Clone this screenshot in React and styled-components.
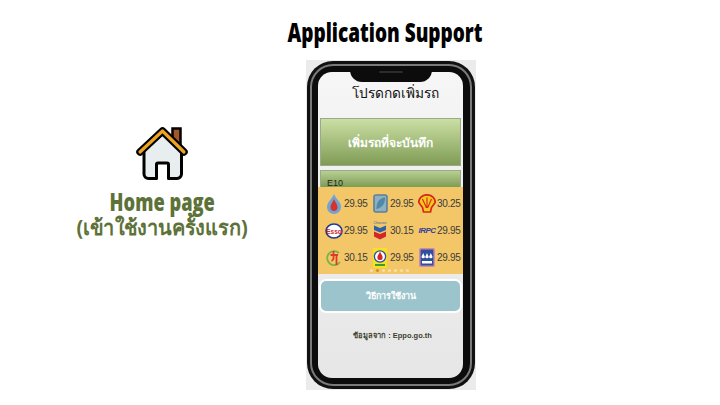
import React from 'react';
import styled, { createGlobalStyle } from 'styled-components';

const GlobalStyle = createGlobalStyle`
  html, body { margin: 0; padding: 0; background: #fff; }
  body { font-family: "Liberation Sans", "Noto Sans", sans-serif; }
`;

const HEADING_FONT = '"Open Sans", "Noto Sans", sans-serif';

const Page = styled.div`
  width: 720px;
  height: 405px;
  overflow: hidden;
  display: flex;
  background: #fff;
`;

const LeftColumn = styled.div`
  width: 324px;
  padding-top: 127px;
  display: flex;
  flex-direction: column;
  align-items: center;
`;

const HomeTitle = styled.div`
  margin-top: 9px;
  font: 800 24px/26px ${HEADING_FONT};
  color: #5d7239;
  transform: scaleX(0.76);
  white-space: nowrap;
`;

const HomeSubtitle = styled.div`
  font: 700 21px/25px ${HEADING_FONT};
  color: #5d7239;
  transform: scaleX(0.95);
  white-space: nowrap;
`;

const RightColumn = styled.div`
  width: 170px;
  margin-left: -18px;
  display: flex;
  flex-direction: column;
`;

const MainTitle = styled.h1`
  margin: 16px 12px 0 0;
  width: 158px;
  align-self: center;
  font: 800 26px/32px ${HEADING_FONT};
  color: #000;
  white-space: nowrap;
  display: flex;
  justify-content: center;
  transform: scaleX(0.73);
`;

const PhoneShot = styled.div`
  margin-top: 12px;
  width: 170px;
  height: 330px;
  background: #ebebeb;
  padding: 1px;
  box-sizing: border-box;
`;

const PhoneFrame = styled.div`
  position: relative;
  height: 100%;
  box-sizing: border-box;
  border-radius: 26px;
  background: #111;
  padding: 3px;
`;

const PhoneBezel = styled.div`
  height: 100%;
  box-sizing: border-box;
  border-radius: 23px;
  border: 2px solid #7a7a7a;
  background: #0c0c0c;
  padding: 6px 7px 6px 6px;
`;

const Screen = styled.div`
  height: 100%;
  box-sizing: border-box;
  border-radius: 14px;
  overflow: hidden;
  background: linear-gradient(#f6f6f6, #e6e6e6);
  display: flex;
  flex-direction: column;
  align-items: center;
`;

const Notch = styled.div`
  position: absolute;
  top: 5px;
  left: 43px;
  width: 82px;
  height: 16px;
  background: #0c0c0c;
  border-radius: 0 0 12px 12px;
  &::after {
    content: '';
    position: absolute;
    top: 5px;
    left: 29px;
    width: 24px;
    height: 2px;
    border-radius: 1px;
    background: #2c2c2c;
  }
`;

const ScreenTitle = styled.div`
  margin-top: 9px;
  padding-left: 9px;
  font: 400 13.7px/24px "Noto Sans", "DejaVu Sans", sans-serif;
  color: #111;
`;

const AddButton = styled.div`
  margin-top: 13px;
  width: 141px;
  height: 48px;
  display: flex;
  align-items: center;
  justify-content: center;
  background: linear-gradient(#cbdfa4, #7f9c55);
  border: 1px solid #9aa98a;
  box-sizing: border-box;
  color: #fff;
  font-size: 12px;
  font-weight: 700;
`;

const FuelBar = styled.div`
  margin-top: 4px;
  width: 141px;
  height: 17px;
  box-sizing: border-box;
  padding-left: 6px;
  display: flex;
  align-items: flex-end;
  background: linear-gradient(#b7d092, #7f9c55);
  border: 1px solid #9aa98a;
  border-bottom: 0;
`;

const FuelLabel = styled.span`
  font-size: 9px;
  line-height: 9px;
  margin-bottom: -1px;
  color: #222;
  position: relative;
`;

const PricePanel = styled.div`
  width: 100%;
  height: 87px;
  box-sizing: border-box;
  background: #f3c767;
  padding: 3px 1px 0 7px;
  position: relative;
`;

const PriceGrid = styled.div`
  display: grid;
  grid-template-columns: 46px 47px 46px;
  grid-auto-rows: 27px;
`;

const PriceCell = styled.div`
  display: flex;
  align-items: center;
`;

const LogoSlot = styled.div`
  width: 18px;
  height: 21px;
  display: flex;
  align-items: center;
  justify-content: center;
`;

const Price = styled.span`
  font-size: 10px;
  letter-spacing: -0.3px;
  color: #3c3c3c;
  margin-left: 1px;
`;

const IrpcText = styled.span`
  font-size: 8px;
  font-weight: 700;
  font-style: italic;
  color: #33409a;
  letter-spacing: -0.5px;
`;

const Dots = styled.div`
  position: absolute;
  bottom: 2px;
  left: 52px;
  display: flex;
  gap: 3px;
`;

const Dot = styled.span`
  width: 3px;
  height: 3px;
  border-radius: 50%;
  background: ${p => (p.$active ? '#d98c1e' : '#f7dfa8')};
`;

const HelpButton = styled.div`
  margin-top: 5px;
  width: 143px;
  height: 34px;
  box-sizing: border-box;
  border: 2px solid #fff;
  border-radius: 7px;
  background: #9cc4cc;
  color: #fff;
  font-size: 9px;
  font-weight: 700;
  display: flex;
  align-items: center;
  justify-content: center;
`;

const Source = styled.div`
  margin-top: 16px;
  padding-left: 4px;
  font-size: 7.5px;
  font-weight: 700;
  color: #3e3e2e;
`;

const HouseIcon = () => (
  <svg width="52" height="53" viewBox="0 0 52 53">
    <rect x="36.5" y="1.5" width="8" height="17" fill="#a5552a" stroke="#000" strokeWidth="2.5" />
    <path d="M8 22 V47 a4.500 4.500 0 0 0 4.500 4.500 H20.500 V37.500 a1.500 1.500 0 0 1 1.500 -1.500 H31 a1.500 1.500 0 0 1 1.500 1.500 V51.500 H41 a4.500 4.500 0 0 0 4.500 -4.500 V22 L26.500 7 Z" fill="#e8edf0" stroke="#000" strokeWidth="3" strokeLinejoin="round" />
    <path d="M4 25 L26.500 4 L48 25" fill="none" stroke="#000" strokeWidth="7.500" strokeLinecap="round" strokeLinejoin="round" />
    <path d="M4 25 L26.500 4 L48 25" fill="none" stroke="#eea321" strokeWidth="3.200" strokeLinecap="round" strokeLinejoin="round" />
  </svg>
);

const PttLogo = () => (
  <svg width="14" height="20" viewBox="0 0 14 20">
    <path d="M7 0 C9 5 14 8 14 13 a7 7 0 0 1 -14 0 C0 8 5 5 7 0Z" fill="#6fa3d6" />
    <path d="M7 5 C8 8 10.500 10 10.500 13 a3.500 4 0 0 1 -7 0 C3.500 10 6 8 7 5Z" fill="#d6322c" />
  </svg>
);

const BangchakLogo = () => (
  <svg width="15" height="19" viewBox="0 0 15 19">
    <rect x="1" y="1" width="13" height="17" rx="2" fill="#8fb0bf" stroke="#5b7f9e" strokeWidth="1.600" />
    <path d="M3.500 15 C3 8 7 4 12 3.500 C12.500 9 9 14 3.500 15Z" fill="#4f89a8" />
  </svg>
);

const ShellLogo = () => (
  <svg width="18" height="19" viewBox="0 0 18 19">
    <path d="M9 0.800 C14 0.800 17.300 4.500 17.200 8.500 L13.500 13.500 L12.500 18 H5.500 L4.500 13.500 L0.800 8.500 C0.700 4.500 4 0.800 9 0.800Z" fill="#f6c81e" stroke="#d6281f" strokeWidth="1.700" strokeLinejoin="round" />
    <path d="M9 14 V3.500 M8.500 14 L4.500 5 M9.500 14 L13.500 5" stroke="#d6281f" strokeWidth="1.100" />
  </svg>
);

const EssoLogo = () => (
  <svg width="18" height="16" viewBox="0 0 18 16">
    <ellipse cx="9" cy="8" rx="8" ry="7" fill="#fff" stroke="#263a8c" strokeWidth="1.600" />
    <text x="9" y="10.500" textAnchor="middle" fontSize="6.500" fontWeight="700" fill="#d3262b" fontFamily="Liberation Sans, sans-serif">Esso</text>
  </svg>
);

const ChevronLogo = () => (
  <svg width="14" height="19" viewBox="0 0 14 19">
    <text x="7" y="3" textAnchor="middle" fontSize="3.400" fill="#2a62a8" fontFamily="Liberation Sans, sans-serif">Chevron</text>
    <path d="M1 4.500 L7 7 L13 4.500 V9 L7 11.500 L1 9Z" fill="#2a62a8" />
    <path d="M1 10.500 L7 13 L13 10.500 V15.500 L7 18.500 L1 15.500Z" fill="#d3262b" />
  </svg>
);

const PtLogo = () => (
  <svg width="16" height="20" viewBox="0 0 16 20">
    <path d="M13 5 A7 7 0 1 0 14 14" fill="none" stroke="#7cb342" strokeWidth="1.800" />
    <path d="M4.500 7 H12 M7.500 3 V10 a3 3 0 0 1 -2 3 M10.500 7 V17" fill="none" stroke="#dc3a2c" strokeWidth="1.800" />
  </svg>
);

const SuscoLogo = () => (
  <svg width="14" height="20" viewBox="0 0 14 20">
    <rect width="14" height="20" fill="#f6e31c" />
    <circle cx="7" cy="8.500" r="5.600" fill="#fff" stroke="#2a4fa8" strokeWidth="1.300" />
    <path d="M7 3.800 C8.500 6.500 9.600 7.800 9.600 9.400 a2.600 2.600 0 0 1 -5.200 0 C4.400 7.800 5.500 6.500 7 3.800Z" fill="#d3262b" />
    <rect x="2" y="16" width="10" height="2" fill="#3f9a3a" />
  </svg>
);

const PureLogo = () => (
  <svg width="16" height="19" viewBox="0 0 16 19">
    <rect x="0.800" y="0.800" width="14.400" height="17.400" rx="1" fill="#2d4f9e" stroke="#d08aa8" strokeWidth="1.600" />
    <path d="M4.200 5 l1.800 4 a1.900 1.900 0 0 1 -3.600 0Z M8 5 l1.800 4 a1.900 1.900 0 0 1 -3.600 0Z M11.800 5 l1.800 4 a1.900 1.900 0 0 1 -3.600 0Z" fill="#fff" />
    <rect x="3" y="13" width="10" height="2.500" fill="#fff" />
  </svg>
);

const prices = [
  { logo: <PttLogo />, value: '29.95' },
  { logo: <BangchakLogo />, value: '29.95' },
  { logo: <ShellLogo />, value: '30.25' },
  { logo: <EssoLogo />, value: '29.95' },
  { logo: <ChevronLogo />, value: '30.15' },
  { logo: <IrpcText>IRPC</IrpcText>, value: '29.95' },
  { logo: <PtLogo />, value: '30.15' },
  { logo: <SuscoLogo />, value: '29.95' },
  { logo: <PureLogo />, value: '29.95' },
];

export default function App() {
  return (
    <Page>
      <GlobalStyle />
      <LeftColumn>
        <HouseIcon />
        <HomeTitle>Home page</HomeTitle>
        <HomeSubtitle>(เข้าใช้งานครั้งแรก)</HomeSubtitle>
      </LeftColumn>
      <RightColumn>
        <MainTitle>Application Support</MainTitle>
        <PhoneShot>
          <PhoneFrame>
            <Notch />
            <PhoneBezel>
              <Screen>
                <ScreenTitle>โปรดกดเพิ่มรถ</ScreenTitle>
                <AddButton>เพิ่มรถที่จะบันทึก</AddButton>
                <FuelBar><FuelLabel>E10</FuelLabel></FuelBar>
                <PricePanel>
                  <PriceGrid>
                    {prices.map((p, i) => (
                      <PriceCell key={i}>
                        <LogoSlot>{p.logo}</LogoSlot>
                        <Price>{p.value}</Price>
                      </PriceCell>
                    ))}
                  </PriceGrid>
                  <Dots>
                    {[0, 1, 2, 3, 4, 5, 6].map(i => <Dot key={i} $active={i === 1} />)}
                  </Dots>
                </PricePanel>
                <HelpButton>วิธีการใช้งาน</HelpButton>
                <Source>ข้อมูลจาก : Eppo.go.th</Source>
              </Screen>
            </PhoneBezel>
          </PhoneFrame>
        </PhoneShot>
      </RightColumn>
    </Page>
  );
}
